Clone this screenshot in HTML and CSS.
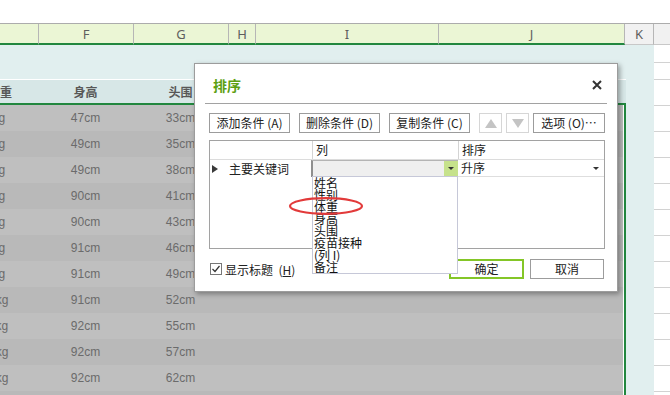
FILE: index.html
```html
<!DOCTYPE html>
<html lang="zh-CN">
<head>
<meta charset="utf-8">
<title>排序</title>
<link rel="stylesheet" href="styles.css">
</head>
<body>
<div class="app">
  <div class="topbar"></div>
  <div class="colhead">
    <div class="ch sel w-e"></div>
    <div class="ch sel w-f">F</div>
    <div class="ch sel w-g">G</div>
    <div class="ch sel w-h">H</div>
    <div class="ch sel w-i">I</div>
    <div class="ch sel w-j">J</div>
    <div class="ch w-k">K</div>
    <div class="ch w-l"></div>
  </div>
  <div class="sheet">
    <div class="main">
      <div class="titlearea"></div>
      <div class="hdrrow">
        <div class="c ce"><span class="shift">体重</span></div>
        <div class="c cf">身高</div>
        <div class="c cg">头围</div>
      </div>
      <div class="data">
        <div class="row odd"><div class="c ce">3.2kg</div><div class="c cf">47cm</div><div class="c cg">33cm</div></div>
        <div class="row even"><div class="c ce">3.5kg</div><div class="c cf">49cm</div><div class="c cg">35cm</div></div>
        <div class="row odd"><div class="c ce">4.1kg</div><div class="c cf">49cm</div><div class="c cg">38cm</div></div>
        <div class="row even"><div class="c ce">5.6kg</div><div class="c cf">90cm</div><div class="c cg">41cm</div></div>
        <div class="row odd"><div class="c ce">6.3kg</div><div class="c cf">90cm</div><div class="c cg">43cm</div></div>
        <div class="row even"><div class="c ce">7.2kg</div><div class="c cf">91cm</div><div class="c cg">46cm</div></div>
        <div class="row odd"><div class="c ce">8.5kg</div><div class="c cf">91cm</div><div class="c cg">49cm</div></div>
        <div class="row even"><div class="c ce">10.1kg</div><div class="c cf">91cm</div><div class="c cg">52cm</div></div>
        <div class="row odd"><div class="c ce">11.2kg</div><div class="c cf">92cm</div><div class="c cg">55cm</div></div>
        <div class="row even"><div class="c ce">12.5kg</div><div class="c cf">92cm</div><div class="c cg">57cm</div></div>
        <div class="row odd"><div class="c ce">13.1kg</div><div class="c cf">92cm</div><div class="c cg">62cm</div></div>
        <div class="row even"></div>
      </div>
    </div>
    <div class="kcol"></div>
    <div class="rightcol">
      <div class="rr r1"></div>
      <div class="rr r2"></div>
      <div class="rr"></div><div class="rr"></div><div class="rr"></div><div class="rr"></div>
      <div class="rr"></div><div class="rr"></div><div class="rr"></div><div class="rr"></div>
      <div class="rr"></div><div class="rr"></div><div class="rr"></div><div class="rr"></div>
    </div>
  </div>
</div>

<div class="dialog">
  <div class="dlg-title">
    <h1>排序</h1>
    <svg class="close" width="10" height="10" viewBox="0 0 10 10"><path d="M1 1 L9 9 M9 1 L1 9" stroke="#333" stroke-width="2" fill="none"/></svg>
  </div>
  <div class="dlg-body">
    <div class="btnrow">
      <div class="btn w81">添加条件&nbsp;(<u>A</u>)</div>
      <div class="btn w81">删除条件&nbsp;(<u>D</u>)</div>
      <div class="btn w81">复制条件&nbsp;(<u>C</u>)</div>
      <div class="tools">
        <div class="btn arrow"><span class="tri-up"></span></div>
        <div class="btn arrow"><span class="tri-down"></span></div>
        <div class="btn opt">选项&nbsp;(<u>O</u>)…</div>
      </div>
    </div>
    <div class="grid">
      <div class="g-head">
        <div class="g-c1"></div>
        <div class="g-c2">列</div>
        <div class="g-c3">排序</div>
      </div>
      <div class="g-row">
        <div class="r-c1"><span class="tri-right"></span><span class="kw">主要关键词</span></div>
        <div class="combo"><div class="combo-btn"><span class="tri-small"></span></div></div>
        <div class="r-c3"><span>升序</span><span class="tri-small"></span></div>
      </div>
    </div>
    <div class="foot">
      <div class="check"><svg width="10" height="10" viewBox="0 0 10 10"><path d="M1.5 5 L4 7.5 L8.5 2" stroke="#333" stroke-width="1.2" fill="none"/></svg></div>
      <span class="lbl">显示标题&nbsp;&nbsp;(<u>H</u>)</span>
      <div class="btn ok">确定</div>
      <div class="btn cancel">取消</div>
    </div>
  </div>
  <div class="droplist">
    <div>姓名</div>
    <div>性别</div>
    <div>体重</div>
    <div>身高</div>
    <div>头围</div>
    <div>疫苗接种</div>
    <div>(列 I)</div>
    <div>备注</div>
  </div>
</div>

<svg class="mark" width="76" height="20" viewBox="0 0 76 20"><ellipse cx="38" cy="10" rx="36" ry="7.8" fill="none" stroke="#e23a3a" stroke-width="2.2"/></svg>
</body>
</html>
```

FILE: styles.css
```css
* { box-sizing: border-box; margin: 0; padding: 0; }
html, body { width: 670px; height: 395px; overflow: hidden; }
body {
  background: #fff;
  font-family: "Noto Sans CJK SC", sans-serif;
  position: relative;
}
.app { height: 395px; overflow: hidden; }

.topbar { height: 23px; background: #fff; }

.colhead {
  display: flex;
  height: 22px;
  border-top: 1px solid #acacac;
}
.ch {
  border-right: 1px solid #b6b6b6;
  border-bottom: 1px solid #c8c8c8;
  background: #f1f1f1;
  font: 13px "Noto Sans", sans-serif;
  color: #5e5e5e;
  display: flex;
  align-items: center;
  justify-content: center;
  flex: none;
}
.ch.sel { background: #ebf6d5; border-bottom: 2px solid #22873f; }
.w-e { width: 39px; }
.w-f { width: 95px; }
.w-g { width: 95px; }
.w-h { width: 27px; }
.w-i { width: 183px; }
.w-j { width: 186px; }
.w-k { width: 29px; }
.w-l { flex: 1; border-right: none; }

.sheet { display: flex; height: 350px; overflow: hidden; }
.main { width: 626px; flex: none; }
.titlearea { height: 35px; background: #e1efef; border-bottom: 1px solid #fff; }
.hdrrow {
  height: 23px;
  background: #d7e7e7;
  display: flex;
  font-size: 12px;
  font-weight: bold;
  color: #585858;
  line-height: 23px;
}
.data { border-top: 2px solid #22873f; border-right: 2px solid #22873f; }
.row {
  display: flex;
  height: 26px;
  border-right: 1px solid #fff;
  font: 12px "Liberation Sans", sans-serif;
  line-height: 26px;
  color: #6b6b6b;
}
.row.odd { background: #bfbfbf; }
.row.even { background: #b9b9b9; }
.c { flex: none; text-align: center; white-space: nowrap; }
.ce { width: 95px; margin-left: -57px; }
.cf, .cg { width: 95px; }
.shift { padding-left: 19px; }

.kcol { width: 28px; flex: none; background: #e1efef; }
.rightcol { flex: 1; }
.rr { height: 26px; border-bottom: 1px solid #d2d2d2; }
.rr.r1 { height: 18px; }
.rr.r2 { height: 17px; }

/* dialog */
.dialog {
  position: absolute;
  left: 194px;
  top: 63px;
  width: 424px;
  height: 229px;
  background: #fff;
  border: 1px solid #9c9c9c;
  box-shadow: 2px 2px 5px rgba(0, 0, 0, 0.35);
  font-size: 12px;
  color: #222;
}
.dlg-title {
  margin: 0 10px;
  height: 40px;
  border-bottom: 1px solid #a2a2a2;
  display: flex;
  align-items: center;
  justify-content: space-between;
  padding: 2px 5px 0 8px;
}
.dlg-title h1 { font-size: 14px; font-weight: bold; color: #5d9f12; line-height: 16px; }
.close { display: block; }

.dlg-body { padding: 9px 12px 0 14px; }
.btnrow { display: flex; gap: 9px; height: 20px; }
.tools { display: flex; gap: 4px; }
.btn {
  height: 20px;
  border: 1px solid #9c9c9c;
  background: #fff;
  display: flex;
  align-items: center;
  justify-content: center;
  font-size: 12px;
  line-height: 18px;
  white-space: nowrap;
}
.btn u { text-decoration: none; }
.w81 { width: 81px; }
.btn.arrow { width: 23px; border-color: #d6d6d6; }
.btn.opt { width: 72px; }
.tri-up {
  width: 0; height: 0;
  border-left: 6px solid transparent;
  border-right: 6px solid transparent;
  border-bottom: 9px solid #c4c4c4;
}
.tri-down {
  width: 0; height: 0;
  border-left: 6px solid transparent;
  border-right: 6px solid transparent;
  border-top: 9px solid #c4c4c4;
}

.grid {
  margin-top: 7px;
  height: 109px;
  border: 1px solid #a2a2a2;
}
.g-head { display: flex; height: 19px; border-bottom: 1px solid #dcdcdc; line-height: 18px; }
.g-c1 { width: 103px; border-right: 1px solid #d4d4d4; }
.g-c2 { width: 146px; border-right: 1px solid #d4d4d4; padding-left: 3px; }
.g-c3 { flex: 1; padding-left: 3px; }
.g-row { display: flex; height: 17px; line-height: 16px; }
.r-c1 { width: 101px; display: flex; align-items: center; }
.tri-right {
  width: 0; height: 0;
  margin-left: 2px;
  border-top: 4px solid transparent;
  border-bottom: 4px solid transparent;
  border-left: 6px solid #3a3a3a;
}
.kw { margin-left: 11px; }
.combo {
  width: 147px;
  border-left: 2px solid #8f8f8f;
  border-top: 1px solid #b4b4b4;
  border-bottom: 1px solid #7c7c7c;
  background: #efefef;
  display: flex;
  justify-content: flex-end;
}
.combo-btn {
  width: 14px;
  background: #c6e28c;
  display: flex;
  align-items: center;
  justify-content: center;
}
.tri-small {
  width: 0; height: 0;
  border-left: 3px solid transparent;
  border-right: 3px solid transparent;
  border-top: 3px solid #333;
}
.r-c3 {
  flex: 1;
  border-bottom: 1px solid #dedede;
  display: flex;
  align-items: center;
  justify-content: space-between;
  padding: 0 5px 0 3px;
}

.foot { display: flex; align-items: center; margin-top: 10px; height: 20px; }
.check {
  width: 12px; height: 12px;
  margin-left: 1px;
  border: 1px solid #777;
  display: flex;
  align-items: center;
  justify-content: center;
}
.lbl { margin-left: 3px; }
.btn.ok { margin-left: auto; width: 75px; border: 2px solid #84c627; }
.btn.cancel { margin-left: 6px; margin-right: 1px; width: 74px; }

.droplist {
  position: absolute;
  left: 117px;
  top: 112px;
  width: 146px;
  height: 98px;
  background: #fff;
  border: 1px solid #c6c8d8;
  padding-left: 1px;
  font-size: 12px;
  line-height: 12px;
  color: #111;
}

.mark { position: absolute; left: 288px; top: 196px; }
```
